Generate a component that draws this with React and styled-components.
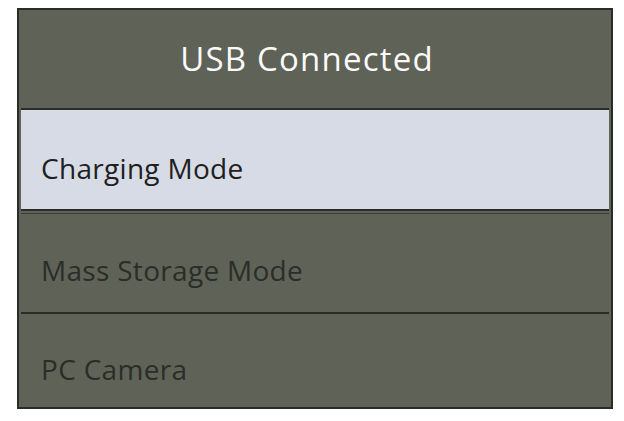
import React from "react";
import styled, { createGlobalStyle } from "styled-components";

const GlobalStyle = createGlobalStyle`
  html, body {
    margin: 0;
    padding: 0;
    background: #ffffff;
  }
  body {
    font-family: "Open Sans", Lato, sans-serif;
  }
`;

export default function App() {
  return (
    <Page>
      <GlobalStyle />
      <Frame>
        <Header>USB Connected</Header>
        <Options>
          <Option $selected $height="103px">Charging Mode</Option>
          <Option $afterSelected $height="101px">Mass Storage Mode</Option>
          <Option $divider>PC Camera</Option>
        </Options>
      </Frame>
    </Page>
  );
}

const Page = styled.div`
  width: 624px;
  height: 421px;
  padding: 8px 0 0 17px;
  box-sizing: border-box;
`;

const Frame = styled.div`
  width: 596px;
  height: 401px;
  box-sizing: border-box;
  border: 2px solid #2a2c28;
  background: #5f6257;
  display: flex;
  flex-direction: column;
`;

const Header = styled.div`
  height: 98px;
  display: flex;
  align-items: center;
  justify-content: center;
  color: #fafafa;
  font-size: 33px;
  letter-spacing: 1.2px;
  padding: 0 16px 2px 0;
  box-sizing: border-box;
`;

const Options = styled.div`
  flex: 1;
  display: flex;
  flex-direction: column;
  padding: 0 2px;
`;

const Option = styled.div`
  display: flex;
  align-items: center;
  padding: 16px 0 0 20px;
  font-size: 28px;
  letter-spacing: 0.3px;
  color: ${(p) => (p.$selected ? "#1f201e" : "#2b2d29")};
  background: ${(p) => (p.$selected ? "#d6dbe5" : "transparent")};
  border-top: ${(p) =>
    p.$selected || p.$divider ? "2px solid #2a2c28" : "none"};
  border-bottom: ${(p) => (p.$selected ? "2px solid #2a2c28" : "none")};
  box-shadow: ${(p) =>
    p.$afterSelected ? "inset 0 2px 0 #5f6257, inset 0 3px 0 #383a35" : "none"};
  height: ${(p) => p.$height || "auto"};
  flex: ${(p) => (p.$height ? "none" : "1")};
  box-sizing: border-box;
`;
